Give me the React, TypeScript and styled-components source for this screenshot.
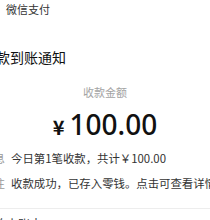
import styled, { createGlobalStyle } from "styled-components";

const GlobalStyle = createGlobalStyle`
  html, body {
    margin: 0;
    padding: 0;
    background: #ffffff;
    overflow: hidden;
  }
  body {
    font-family: "Noto Sans CJK SC", "Noto Sans", sans-serif;
    color: #191919;
  }
`;

const Shell = styled.div`
  width: 246px;
  margin-left: -18px;
  display: flex;
  flex-direction: column;
`;

const Header = styled.div`
  display: flex;
  align-items: center;
  gap: 8px;
  height: 18px;
`;

// avatar sits just left of the visible area
const Avatar = styled.div`
  width: 16px;
  height: 16px;
  border-radius: 4px;
  background: #07c160;
`;

const SenderName = styled.span`
  font-size: 11px;
  line-height: 18px;
  color: #333333;
`;

const Card = styled.div`
  display: flex;
  flex-direction: column;
  padding-top: 31px;
`;

const Title = styled.h1`
  margin: 0;
  font-size: 14px;
  font-weight: 400;
  line-height: 16px;
  color: #111111;
`;

const AmountLabel = styled.div`
  margin-top: 20px;
  text-align: center;
  font-size: 11px;
  line-height: 14px;
  color: #a3a3a3;
`;

const Amount = styled.div`
  margin-top: 8px;
  display: flex;
  justify-content: center;
  align-items: baseline;
  gap: 5px;
  color: #111111;
  line-height: 34px;
`;

const Currency = styled.span`
  font-size: 20px;
  font-weight: 700;
`;

const Value = styled.span`
  font-family: "Noto Sans", sans-serif;
  font-size: 28px;
  font-weight: 500;
`;

const InfoList = styled.div`
  margin-top: 7px;
  display: flex;
  flex-direction: column;
  gap: 11px;
`;

const InfoRow = styled.div`
  display: grid;
  grid-template-columns: 23px 1fr;
  column-gap: 6px;
  font-size: 11.4px;
  line-height: 14px;
  white-space: nowrap;
`;

const InfoLabel = styled.span`
  color: #9a9a9a;
`;

const InfoValue = styled.span`
  color: #333333;
`;

const Divider = styled.hr`
  margin: 18px 0 0;
  border: none;
  border-top: 1px solid #ededed;
`;

const FooterLink = styled.div`
  padding-top: 8px;
  font-size: 12px;
  line-height: 14px;
  color: #333333;
`;

export default function App() {
  return (
    <>
      <GlobalStyle />
      <Shell>
        <Header>
          <Avatar />
          <SenderName>微信支付</SenderName>
        </Header>
        <Card>
          <Title>收款到账通知</Title>
          <AmountLabel>收款金额</AmountLabel>
          <Amount>
            <Currency>¥</Currency>
            <Value>100.00</Value>
          </Amount>
          <InfoList>
            <InfoRow>
              <InfoLabel>信息</InfoLabel>
              <InfoValue>今日第1笔收款，共计￥100.00</InfoValue>
            </InfoRow>
            <InfoRow>
              <InfoLabel>备注</InfoLabel>
              <InfoValue>收款成功，已存入零钱。点击可查看详情</InfoValue>
            </InfoRow>
          </InfoList>
          <Divider />
          <FooterLink>收款小账本</FooterLink>
        </Card>
      </Shell>
    </>
  );
}
